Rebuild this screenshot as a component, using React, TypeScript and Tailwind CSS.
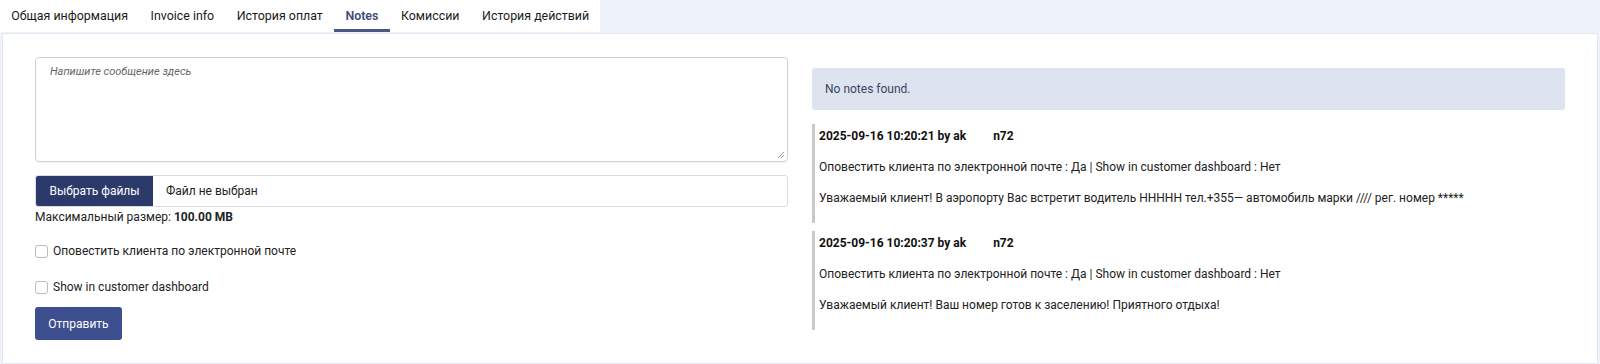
import React from "react";

const tabs = ["Общая информация", "Invoice info", "История оплат", "Notes", "Комиссии", "История действий"];

function NoteBlock({ time, body }: { time: string; body: string }) {
  return (
    <div className="border-l-[3px] border-[#c9c9c9] pl-[4px] pb-[13px] flex flex-col gap-[7px]">
      <div className="h-[24px] flex items-center font-bold text-[12px] text-[#111]">
        <span>{time} by ak</span>
        <span className="inline-block w-[27px]" />
        <span>n72</span>
      </div>
      <div className="h-[24px] flex items-center">
        Оповестить клиента по электронной почте : Да | Show in customer dashboard : Нет
      </div>
      <div className="h-[24px] flex items-center">{body}</div>
    </div>
  );
}

export default function App() {
  return (
    <div
      className="w-[1600px] h-[364px] bg-[#eef2fa] text-[#222] text-[12px] overflow-hidden"
      style={{ fontFamily: "Roboto, 'Liberation Sans', sans-serif" }}
    >
      <div className="flex h-[32px]">
        <div className="flex bg-white">
          {tabs.map((t) => (
            <div
              key={t}
              className={
                "h-[32px] px-[11.3px] flex items-center text-[12.4px] border-b-[3px] " +
                (t === "Notes"
                  ? "border-[#4a5683] text-[#3d4a7a] font-semibold"
                  : "border-transparent text-[#1a1a1a]")
              }
            >
              <span className="pt-[3px]">{t}</span>
            </div>
          ))}
        </div>
      </div>
      <div className="mt-[1px] mx-[2px] h-[331px] bg-white border border-[#e3e8f0] flex gap-[24px] px-[32px]">
        <div className="w-[753px] pt-[23px] flex flex-col">
          <div className="h-[105px] border border-[#cdd2da] rounded-[4px] shadow-[0_1px_1px_rgba(0,0,0,0.05)] px-[14px] pt-[4px] relative">
            <span className="italic text-[11px] text-[#666]">Напишите сообщение здесь</span>
            <svg className="absolute right-[2px] bottom-[2px]" width="8" height="8" viewBox="0 0 8 8">
              <path d="M7 1L1 7M7 4L4 7" stroke="#999" strokeWidth="1" />
            </svg>
          </div>
          <div className="mt-[13px] h-[32px] border border-[#d9dee6] rounded-[3px] flex items-stretch overflow-hidden">
            <div className="w-[117px] bg-[#2c3a6b] text-white flex items-center justify-center">Выбрать файлы</div>
            <div className="flex items-center pl-[13px] text-[#222]">Файл не выбран</div>
          </div>
          <div className="h-[18px] mt-[1px] flex items-center">
            Максимальный размер:&nbsp;<b>100.00 MB</b>
          </div>
          <label className="mt-[17px] flex items-center gap-[5px] h-[16px]">
            <span className="w-[13px] h-[13px] border border-[#b7bcc6] rounded-[3px] bg-white" />
            <span>Оповестить клиента по электронной почте</span>
          </label>
          <label className="mt-[20px] flex items-center gap-[5px] h-[16px]">
            <span className="w-[13px] h-[13px] border border-[#b7bcc6] rounded-[3px] bg-white" />
            <span>Show in customer dashboard</span>
          </label>
          <div className="mt-[12px]">
            <button className="w-[87px] h-[33px] bg-[#3d4f8f] text-white rounded-[3px] text-[12px]">Отправить</button>
          </div>
        </div>
        <div className="w-[753px] pt-[34px] flex flex-col">
          <div className="h-[42px] bg-[#dde4ef] rounded-[3px] flex items-center pl-[13px] text-[#3a4560]">No notes found.</div>
          <div className="mt-[14px] flex flex-col gap-[8px]">
            <NoteBlock
              time="2025-09-16 10:20:21"
              body="Уважаемый клиент! В аэропорту Вас встретит водитель ННННН тел.+355— автомобиль марки //// рег. номер *****"
            />
            <NoteBlock
              time="2025-09-16 10:20:37"
              body="Уважаемый клиент! Ваш номер готов к заселению! Приятного отдыха!"
            />
          </div>
        </div>
      </div>
    </div>
  );
}
